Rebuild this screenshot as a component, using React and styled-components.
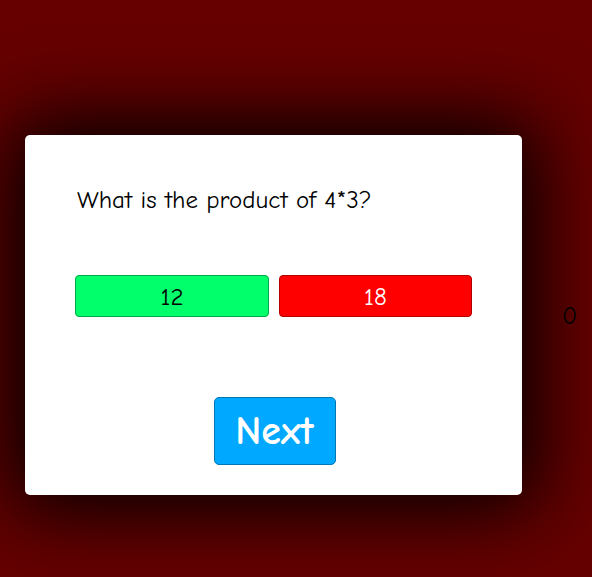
import React from 'react';
import styled, { createGlobalStyle } from 'styled-components';

const GlobalStyle = createGlobalStyle`
  html, body {
    margin: 0;
    padding: 0;
    background-color: #660000;
    font-family: "Comic Sans MS", "Comic Neue", "Open Sans", sans-serif;
  }
`;

const answers = [
  { text: '12', correct: true },
  { text: '18', correct: false },
];

export default function App() {
  return (
    <>
      <GlobalStyle />
      <Page>
        <Card>
          <Question>What is the product of 4*3?</Question>
          <Answers>
            {answers.map((a) => (
              <AnswerButton key={a.text} correct={a.correct}>
                {a.text}
              </AnswerButton>
            ))}
          </Answers>
          <Footer>
            <NextButton>Next</NextButton>
          </Footer>
        </Card>
        <Score>0</Score>
      </Page>
    </>
  );
}

const Page = styled.div`
  display: flex;
  flex-direction: row;
  align-items: center;
  gap: 40px;
  width: 100vw;
  height: 577px;
  box-sizing: border-box;
  padding: 135px 0 82px 25px;
  overflow: hidden;
`;

const Card = styled.div`
  width: 497px;
  height: 360px;
  box-sizing: border-box;
  background-color: white;
  border-radius: 5px;
  box-shadow: 0 0 80px 15px #000;
  padding: 48px 50px 0 52px;
  display: flex;
  flex-direction: column;
`;

const Question = styled.h2`
  margin: 0;
  font-size: 25px;
  font-weight: normal;
  color: #000;
  line-height: 34px;
`;

const Answers = styled.div`
  display: grid;
  grid-template-columns: 194px 193px;
  gap: 10px;
  margin: 58px 0 0 -2px;
`;

const AnswerButton = styled.button`
  height: 42px;
  box-sizing: border-box;
  border-radius: 4px;
  border: 1px solid ${(props) => (props.correct ? '#00a84a' : '#b30000')};
  background-color: ${(props) => (props.correct ? '#00ff6a' : '#ff0000')};
  color: ${(props) => (props.correct ? '#000' : '#fff')};
  font-family: inherit;
  font-size: 25px;
  padding: 0;
  cursor: pointer;
`;

const Footer = styled.div`
  display: flex;
  justify-content: center;
  margin-top: 80px;
`;

const NextButton = styled.button`
  width: 122px;
  height: 68px;
  box-sizing: border-box;
  border-radius: 5px;
  border: 1px solid #0077b5;
  background-color: #00a8ff;
  color: white;
  font-family: inherit;
  font-size: 40px;
  font-weight: bold;
  padding: 0;
  cursor: pointer;
`;

const Score = styled.div`
  font-size: 25px;
  color: #000;
`;
